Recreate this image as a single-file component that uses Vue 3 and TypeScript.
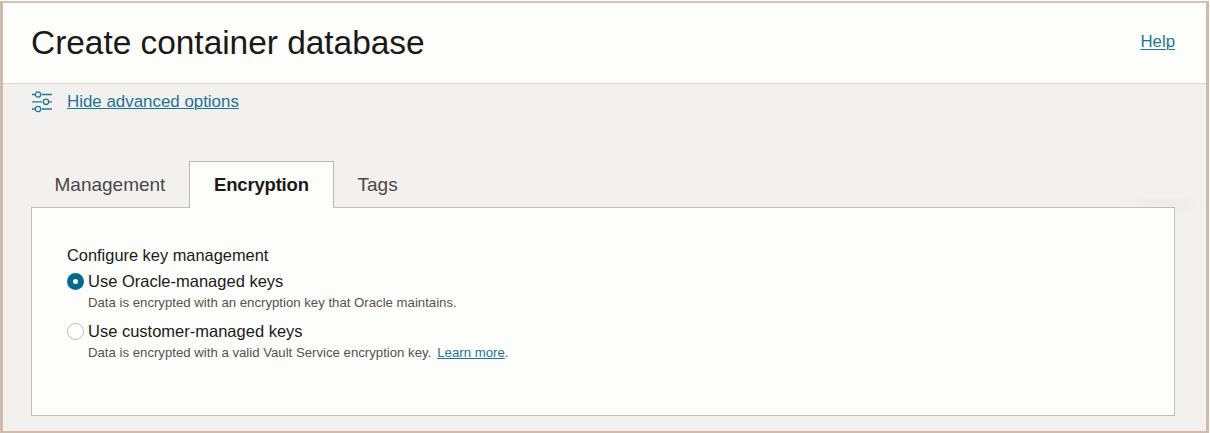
<script setup lang="ts">
import { ref } from 'vue'

interface KeyOption {
  id: string
  label: string
  hint: string
  link?: string
}

const tabs: string[] = ['Management', 'Encryption', 'Tags']
const activeTab = ref('Encryption')
const selected = ref('oracle')
const options: KeyOption[] = [
  {
    id: 'oracle',
    label: 'Use Oracle-managed keys',
    hint: 'Data is encrypted with an encryption key that Oracle maintains.',
  },
  {
    id: 'customer',
    label: 'Use customer-managed keys',
    hint: 'Data is encrypted with a valid Vault Service encryption key.',
    link: 'Learn more',
  },
]
</script>

<template>
  <div class="frame">
    <header class="header">
      <h1 class="title">Create container database</h1>
      <a class="link help">Help</a>
    </header>
    <main class="body">
      <div class="advanced">
        <svg class="sliders" width="22" height="22" viewBox="0 0 22 22" fill="none">
          <path d="M1 3.5H4.2M10.8 3.5H21M1 10.8H11.2M17.8 10.8H21M1 18H4.2M10.8 18H21" />
          <circle cx="7" cy="3.5" r="2.7" />
          <circle cx="15" cy="10.8" r="2.7" />
          <circle cx="7" cy="18" r="2.7" />
        </svg>
        <a class="link advanced-link">Hide advanced options</a>
      </div>
      <nav class="tabs">
        <div
          v-for="tab in tabs"
          :key="tab"
          class="tab"
          :class="{ active: tab === activeTab }"
          @click="activeTab = tab"
        >
          {{ tab }}
        </div>
      </nav>
      <section class="panel">
        <div class="legend">Configure key management</div>
        <div v-for="o in options" :key="o.id" class="option" @click="selected = o.id">
          <span class="radio" :class="{ checked: selected === o.id }"></span>
          <div>
            <div class="label">{{ o.label }}</div>
            <div class="hint">
              {{ o.hint }}<template v-if="o.link"><a class="link more">{{ o.link }}</a>.</template>
            </div>
          </div>
        </div>
      </section>
    </main>
  </div>
</template>

<style>
body {
  background: #fdfcfa;
}
</style>

<style scoped>
.frame {
  box-sizing: border-box;
  width: 1209px;
  height: 432px;
  border: 3px solid #d0bbab;
  border-top: 2px solid #d4c3b4;
  border-bottom-width: 2px;
  margin-top: 1px;
  background: #f3f1f0;
  font-family: "Liberation Sans", Arial, sans-serif;
  color: #1b1a19;
  overflow: hidden;
}
.header {
  box-sizing: border-box;
  height: 81px;
  padding: 0 31px 0 28px;
  display: flex;
  justify-content: space-between;
  align-items: center;
  background: #fdfdfb;
  border-bottom: 1px solid #d9d7d5;
}
.title {
  margin: 0;
  font-size: 33.5px;
  letter-spacing: -0.05px;
  font-weight: 400;
  line-height: 40px;
}
.link {
  color: #1c7595;
  text-decoration: underline;
  text-decoration-thickness: 1px;
  text-underline-offset: 1px;
  cursor: pointer;
}
.help {
  font-size: 16.8px;
  margin-bottom: 3px;
  text-underline-offset: 2px;
}
.body {
  height: 348px;
  padding: 0 31px 0 28px;
  background:
    radial-gradient(ellipse 40px 22px at 50% 0, #ecebe9, #f3f1f000)
    1120px 115px / 80px 24px no-repeat;
}
.advanced {
  height: 36px;
  display: flex;
  align-items: center;
  gap: 14px;
}
.sliders {
  stroke: #24789a;
  stroke-width: 1.3;
}
.advanced-link {
  font-size: 16.9px;
}
.tabs {
  display: flex;
  height: 47px;
  margin-top: 41px;
  position: relative;
}
.tab {
  box-sizing: border-box;
  height: 47px;
  padding: 0 23.5px;
  font-size: 19px;
  line-height: 47px;
  color: #4a4847;
}
.tab:first-child {
  width: 158px;
}
.tab.active {
  width: 145px;
  padding: 0 24px;
  border: 1px solid #bdb8b5;
  border-bottom: 0;
  background: #fdfdfb;
  color: #1b1a19;
  font-weight: 700;
  font-size: 18.5px;
  letter-spacing: -0.18px;
  line-height: 46px;
}
.panel {
  box-sizing: border-box;
  height: 209px;
  margin-top: -1px;
  padding: 37px 35px;
  border: 1px solid #c2bebb;
  background: #fdfdfb;
}
.legend {
  font-size: 16.4px;
  line-height: 20px;
  margin-bottom: 4px;
}
.option {
  display: flex;
  gap: 4px;
  height: 50px;
}
.radio {
  box-sizing: border-box;
  flex: none;
  width: 17px;
  height: 17px;
  margin-top: 4px;
  border: 1px solid #bdb9b6;
  border-radius: 50%;
  background: #fff;
}
.radio.checked {
  border: 6px solid #05698c;
}
.label {
  font-size: 16.5px;
  line-height: 24px;
}
.hint {
  font-size: 13.2px;
  line-height: 20px;
  color: #555352;
  white-space: nowrap;
}
.more {
  margin-left: 6px;
}
</style>
